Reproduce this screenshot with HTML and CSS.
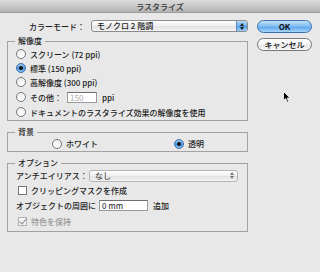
FILE: index.html
```html
<!DOCTYPE html>
<html lang="ja">
<head>
  <meta charset="UTF-8">
  <title>ラスタライズ</title>
  <link rel="stylesheet" href="styles.css">
</head>
<body>
  <div class="window">
    <div class="titlebar">ラスタライズ</div>
    <div class="content">
      <div class="main">
        <div class="mode-row">
          <span class="label">カラーモード：</span>
          <div class="popup"><span class="value">モノクロ 2 階調</span><span class="stepper"><i class="up"></i><i class="down"></i></span></div>
        </div>

        <fieldset class="group res">
          <legend>解像度</legend>
          <div class="opt"><span class="radio"></span>スクリーン (72 ppi)</div>
          <div class="opt"><span class="radio on"></span>標準 (150 ppi)</div>
          <div class="opt"><span class="radio"></span>高解像度 (300 ppi)</div>
          <div class="opt other"><span class="radio"></span>その他：<span class="field dim">150</span><span class="unit">ppi</span></div>
          <div class="opt"><span class="radio"></span>ドキュメントのラスタライズ効果の解像度を使用</div>
        </fieldset>

        <fieldset class="group bg">
          <legend>背景</legend>
          <div class="bg-row">
            <div class="opt"><span class="radio"></span>ホワイト</div>
            <div class="opt"><span class="radio on"></span>透明</div>
          </div>
        </fieldset>

        <fieldset class="group opts">
          <legend>オプション</legend>
          <div class="opt aa">
            <span class="label">アンチエイリアス：</span>
            <div class="popup off"><span class="value">なし</span><span class="stepper"><i class="up"></i><i class="down"></i></span></div>
          </div>
          <div class="opt check-row"><span class="check"></span>クリッピングマスクを作成</div>
          <div class="opt">オブジェクトの周囲に<span class="field mm">0 mm</span><span class="unit">追加</span></div>
          <div class="opt check-row dim"><span class="check checked"></span>特色を保持</div>
        </fieldset>
      </div>

      <div class="buttons">
        <div class="btn ok">OK</div>
        <div class="btn">キャンセル</div>
      </div>
    </div>

    <svg class="cursor" width="8" height="12" viewBox="0 0 8 12">
      <path d="M0.5 0.5 L0.5 9.5 L2.6 7.6 L4.2 11.2 L5.6 10.6 L4.1 7.1 L7 7.1 Z" fill="#000" stroke="#fff" stroke-width="0.8"/>
    </svg>
  </div>
</body>
</html>
```

FILE: styles.css
```css
* {
	box-sizing: border-box;
}

body {
	margin: 0;
	width: 320px;
	height: 272px;
	background: #e8e8e8;
	font-family: "Noto Sans CJK JP", "Liberation Sans", sans-serif;
	font-size: 8px;
	font-weight: 500;
	color: #1a1a1a;
	overflow: hidden;
}

.window {
	position: relative;
	height: 272px;
}

.titlebar {
	height: 13px;
	line-height: 13px;
	text-align: center;
	color: #333;
	background: linear-gradient(#dcdcdc, #c4c4c4 60%, #b4b4b4);
	border-bottom: 1px solid #9a9a9a;
}

.content {
	display: flex;
}

.main {
	width: 241px;
	margin-left: 7px;
}

/* colour mode row */
.mode-row {
	display: flex;
	align-items: center;
	height: 12px;
	margin-top: 7px;
	padding-left: 22px;
	gap: 6px;
}

.popup {
	display: flex;
	align-items: center;
	height: 12px;
	flex: 1;
	border: 1px solid #8c8c8c;
	border-radius: 3px;
	background: linear-gradient(#ffffff, #eeeeee 50%, #e2e2e2 51%, #f4f4f4);
	overflow: hidden;
}

.popup .value {
	flex: 1;
	padding-left: 5px;
	line-height: 10px;
}

.stepper {
	width: 11px;
	height: 10px;
	display: flex;
	flex-direction: column;
	align-items: center;
	justify-content: center;
	gap: 1px;
	background: linear-gradient(#bcdcfb, #6aaeee 50%, #4e9ae4 51%, #9ccffa);
	border-left: 1px solid #5a86bd;
}

.stepper i {
	width: 0;
	height: 0;
	border-left: 2px solid transparent;
	border-right: 2px solid transparent;
}

.stepper .up {
	border-bottom: 3px solid #1a1a1a;
}

.stepper .down {
	border-top: 3px solid #1a1a1a;
}

.popup.off {
	border-color: #b4b4b4;
	color: #555;
}

.popup.off .stepper {
	background: none;
	border-left: none;
}

.popup.off .stepper .up {
	border-bottom-color: #777;
}

.popup.off .stepper .down {
	border-top-color: #777;
}

/* group boxes */
.group {
	margin: 0;
	min-inline-size: 0;
	border: 1px solid #a2a2a2;
	padding: 0 0 1px 6px;
}

.group legend {
	padding: 0 3px;
	margin-left: 1px;
	line-height: 10px;
}

.res {
	margin-top: 4px;
	padding-top: 1px;
}

.opt {
	display: flex;
	align-items: center;
	height: 14px;
	white-space: nowrap;
}

.res .opt {
	padding-left: 2px;
}

.res .other {
	height: 16px;
}

.radio {
	width: 10px;
	height: 10px;
	border-radius: 50%;
	border: 1px solid #777;
	background: linear-gradient(#f0f0f0, #ffffff);
	margin-right: 4px;
	flex: none;
	display: flex;
	align-items: center;
	justify-content: center;
}

.radio.on {
	border-color: #3d6da8;
	background: linear-gradient(#9ccaf6, #4f98e2 55%, #8ac2f6);
}

.radio.on::after {
	content: "";
	width: 4px;
	height: 4px;
	border-radius: 50%;
	background: #111;
}

.field {
	height: 11px;
	line-height: 10px;
	border: 1px solid #9a9a9a;
	border-top-color: #707070;
	background: #fff;
	padding-left: 2px;
	font-weight: normal;
}

.field.dim {
	width: 30px;
	margin-left: 5px;
	color: #aaa;
}

.unit {
	margin-left: 5px;
}

.bg {
	margin-top: 6px;
}

.bg-row {
	display: flex;
	height: 13px;
	padding-left: 38px;
	gap: 76px;
}

.bg-row .opt {
	height: 13px;
}

.opts {
	margin-top: 6px;
	padding-bottom: 2px;
}

.opts .opt {
	height: 15px;
	padding-left: 2px;
}

.aa .label {
	width: 73px;
}

.aa .popup {
	margin-right: 9px;
}

.check {
	width: 9px;
	height: 9px;
	border: 1px solid #777;
	background: #fff;
	margin: 0 4px 0 2px;
	flex: none;
	position: relative;
}

.check.checked::after {
	content: "";
	position: absolute;
	left: 2px;
	top: -1px;
	width: 3px;
	height: 6px;
	border-right: 1.5px solid #888;
	border-bottom: 1.5px solid #888;
	transform: rotate(40deg);
}

.check-row.dim {
	color: #999;
	height: 16px;
}

.check-row.dim .check {
	border-color: #b0b0b0;
	background: #f4f4f4;
}

.field.mm {
	width: 49px;
	margin-left: 3px;
	color: #111;
}

/* push buttons */
.buttons {
	display: flex;
	flex-direction: column;
	gap: 5px;
	margin-left: 9px;
	padding-top: 7px;
	width: 55px;
}

.btn {
	height: 13px;
	line-height: 11px;
	text-align: center;
	border: 1px solid #777;
	border-radius: 7px;
	background: linear-gradient(#ffffff, #f2f2f2 50%, #e2e2e2 51%, #fafafa);
	color: #111;
}

.btn.ok {
	font-weight: bold;
	border-color: #3e6fae;
	background: linear-gradient(#c4e2fc, #7bbaf1 50%, #58a2e8 51%, #a6d6fc);
}

.cursor {
	position: absolute;
	left: 283px;
	top: 91px;
}
```
